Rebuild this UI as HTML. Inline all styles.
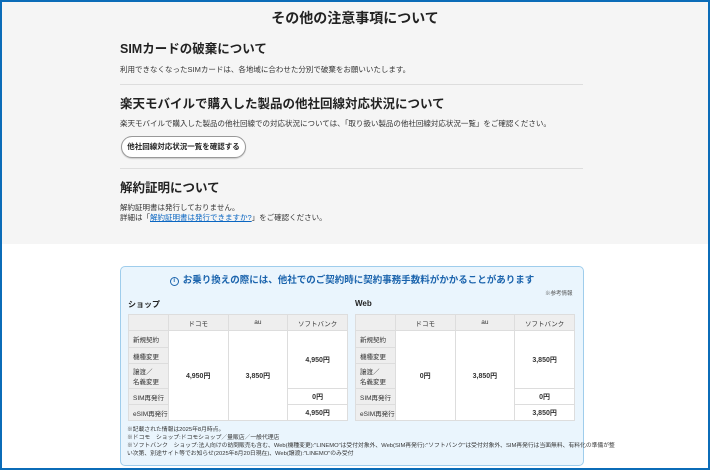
<!DOCTYPE html>
<html><head><meta charset="utf-8"><style>
*{margin:0;padding:0;box-sizing:border-box}
body{width:710px;height:470px;overflow:hidden;background:#fff;font-family:"Liberation Sans","Noto Sans CJK JP",sans-serif;color:#222;position:relative}
.frame{position:absolute;left:0;top:0;width:710px;height:470px;border:2px solid #0b6cb8;z-index:10;pointer-events:none}
.gray{position:absolute;left:0;top:0;width:710px;height:244px;background:#f5f5f5}
.a{position:absolute;white-space:nowrap}
.h1{font-size:14px;font-weight:bold;left:0;width:710px;text-align:center;top:8px}
.h2{font-size:12.5px;font-weight:bold;left:120px}
.p{font-size:7.5px;left:120px;color:#333}
.hr{position:absolute;left:120px;width:463px;height:1px;background:#ddd}
.btn{position:absolute;left:121px;top:136px;width:125px;height:22px;border:1px solid #999;border-radius:11px;background:#fff;font-size:7.5px;font-weight:bold;text-align:center;line-height:20px;box-shadow:0 1px 1px #ccc}
.box{position:absolute;left:120px;top:266px;width:464px;height:200px;background:#eaf5fd;border:1px solid #9fcdec;border-radius:5px}
table{position:absolute;border-collapse:collapse;font-size:6.5px;background:#fff}
td{border:1px solid #ddd;text-align:center;color:#333}
td.l{background:#eee;text-align:left;padding-left:4px}
tr.hd td{background:#eee;height:16px}
td.b{font-weight:bold;font-size:7px}
.n{font-size:5.8px;left:127px;color:#333}
</style></head><body>
<div class="gray"></div>
<div class="a h1">その他の注意事項について</div>
<div class="a h2" style="top:38px">SIMカードの破棄について</div>
<div class="a p" style="top:64px">利用できなくなったSIMカードは、各地域に合わせた分別で破棄をお願いいたします。</div>
<div class="hr" style="top:84px"></div>
<div class="a h2" style="top:93px">楽天モバイルで購入した製品の他社回線対応状況について</div>
<div class="a p" style="top:118px">楽天モバイルで購入した製品の他社回線での対応状況については、「取り扱い製品の他社回線対応状況一覧」をご確認ください。</div>
<div class="btn">他社回線対応状況一覧を確認する</div>
<div class="hr" style="top:168px"></div>
<div class="a h2" style="top:177px">解約証明について</div>
<div class="a p" style="top:202px">解約証明書は発行しておりません。</div>
<div class="a p" style="top:212px">詳細は「<span style="color:#0a66c2;text-decoration:underline">解約証明書は発行できますか?</span>」をご確認ください。</div>

<div class="box"></div>
<div class="a" style="left:120px;width:464px;text-align:center;top:272px;font-size:9.5px;font-weight:bold;color:#1b64ad"><span style="display:inline-block;width:9px;height:9px;border:1px solid #1b64ad;border-radius:50%;font-size:6px;line-height:7px;vertical-align:1px;margin-right:4px">i</span>お乗り換えの際には、他社でのご契約時に契約事務手数料がかかることがあります</div>
<div class="a" style="left:545px;top:289px;font-size:5.5px;color:#555">※参考情報</div>
<div class="a" style="left:128px;top:299px;font-size:8px;font-weight:bold">ショップ</div>
<div class="a" style="left:355px;top:299px;font-size:8px;font-weight:bold">Web</div>

<table style="left:128px;top:314px;width:220px">
<tr class="hd"><td style="width:40px"></td><td style="width:60px">ドコモ</td><td style="width:60px">au</td><td style="width:60px">ソフトバンク</td></tr>
<tr style="height:17px"><td class="l">新規契約</td><td rowspan="5" class="b">4,950円</td><td rowspan="5" class="b">3,850円</td><td rowspan="3" class="b">4,950円</td></tr>
<tr style="height:16px"><td class="l">機種変更</td></tr>
<tr style="height:25px"><td class="l">譲渡／<br>名義変更</td></tr>
<tr style="height:16px"><td class="l">SIM再発行</td><td class="b">0円</td></tr>
<tr style="height:16px"><td class="l">eSIM再発行</td><td class="b">4,950円</td></tr>
</table>
<table style="left:355px;top:314px;width:220px">
<tr class="hd"><td style="width:40px"></td><td style="width:60px">ドコモ</td><td style="width:60px">au</td><td style="width:60px">ソフトバンク</td></tr>
<tr style="height:17px"><td class="l">新規契約</td><td rowspan="5" class="b">0円</td><td rowspan="5" class="b">3,850円</td><td rowspan="3" class="b">3,850円</td></tr>
<tr style="height:16px"><td class="l">機種変更</td></tr>
<tr style="height:25px"><td class="l">譲渡／<br>名義変更</td></tr>
<tr style="height:16px"><td class="l">SIM再発行</td><td class="b">0円</td></tr>
<tr style="height:16px"><td class="l">eSIM再発行</td><td class="b">3,850円</td></tr>
</table>
<div class="a n" style="top:424px">※記載された情報は2025年8月時点。</div>
<div class="a n" style="top:432px">※ドコモ　ショップ:ドコモショップ／量販店／一般代理店</div>
<div class="a n" style="top:440px">※ソフトバンク　ショップ:法人向けの訪問販売も含む、Web(機種変更):"LINEMO"は受付対象外、Web(SIM再発行):"ソフトバンク"は受付対象外、SIM再発行は当面無料、有料化の準備が整</div>
<div class="a n" style="top:448px">い次第、別途サイト等でお知らせ(2025年8月20日現在)、Web(譲渡):"LINEMO"のみ受付</div>
<div class="frame"></div>
</body></html>
